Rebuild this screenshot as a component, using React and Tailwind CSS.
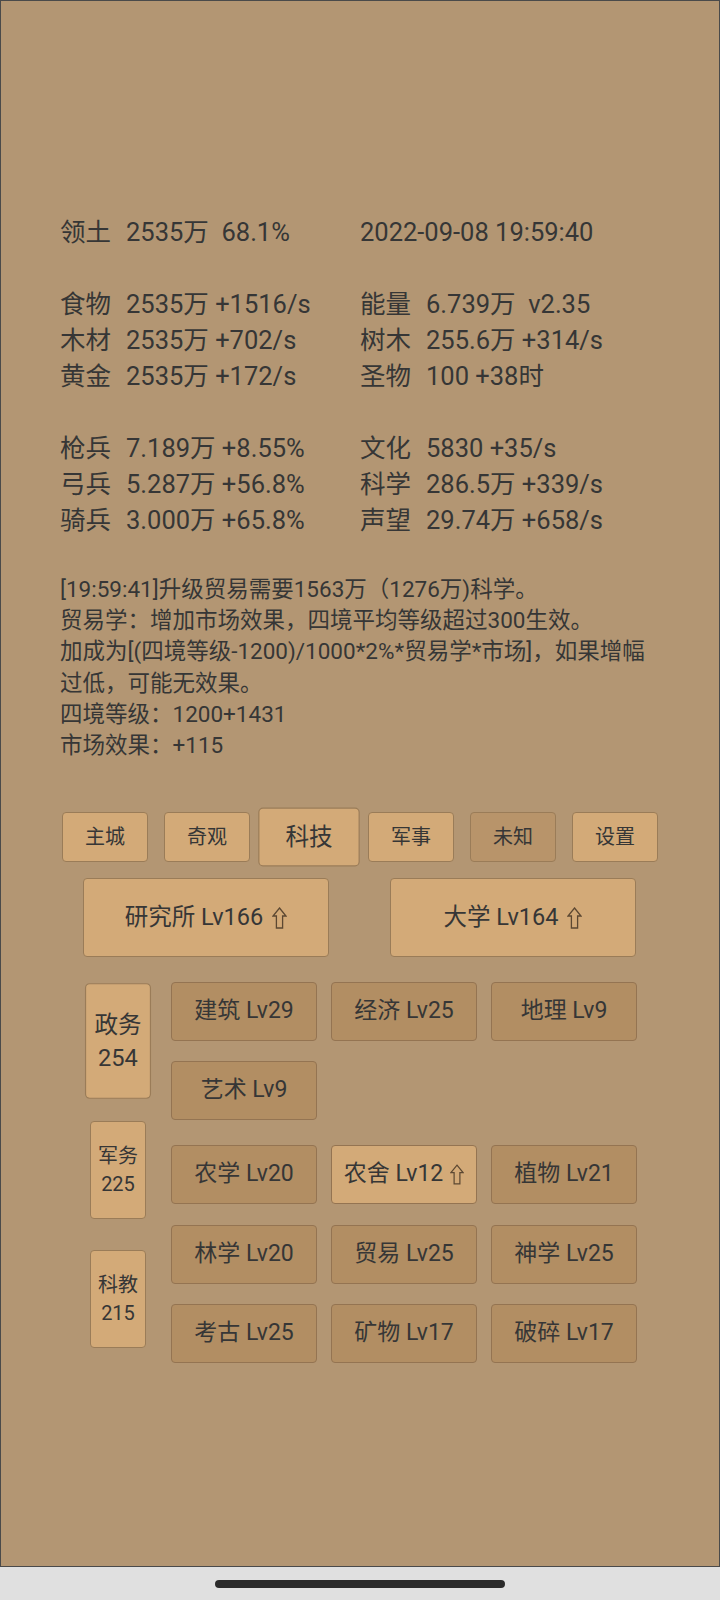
import React from 'react';

const stats = [
  [['领土', '2535万  68.1%'], [null, '2022-09-08 19:59:40']],
  null,
  [['食物', '2535万 +1516/s'], ['能量', '6.739万  v2.35']],
  [['木材', '2535万 +702/s'], ['树木', '255.6万 +314/s']],
  [['黄金', '2535万 +172/s'], ['圣物', '100 +38时']],
  null,
  [['枪兵', '7.189万 +8.55%'], ['文化', '5830 +35/s']],
  [['弓兵', '5.287万 +56.8%'], ['科学', '286.5万 +339/s']],
  [['骑兵', '3.000万 +65.8%'], ['声望', '29.74万 +658/s']],
];

const logLines = [
  '[19:59:41]升级贸易需要1563万（1276万)科学。',
  '贸易学：增加市场效果，四境平均等级超过300生效。',
  '加成为[(四境等级-1200)/1000*2%*贸易学*市场]，如果增幅',
  '过低，可能无效果。',
  '四境等级：1200+1431',
  '市场效果：+115',
];

const tabs = [
  { name: '主城' },
  { name: '奇观' },
  { name: '科技', active: true },
  { name: '军事' },
  { name: '未知', dim: true },
  { name: '设置' },
];

const techRows = [
  { mt: '', items: [{ name: '建筑 Lv29' }, { name: '经济 Lv25' }, { name: '地理 Lv9' }] },
  { mt: 'mt-[20px]', items: [{ name: '艺术 Lv9' }] },
  { mt: 'mt-[25px]', items: [{ name: '农学 Lv20' }, { name: '农舍 Lv12', up: true }, { name: '植物 Lv21' }] },
  { mt: 'mt-[21px]', items: [{ name: '林学 Lv20' }, { name: '贸易 Lv25' }, { name: '神学 Lv25' }] },
  { mt: 'mt-[20px]', items: [{ name: '考古 Lv25' }, { name: '矿物 Lv17' }, { name: '破碎 Lv17' }] },
];

const sides = [
  { name: '政务', num: '254', active: true },
  { name: '军务', num: '225' },
  { name: '科教', num: '215' },
];

function UpArrow({ className }) {
  return (
    <svg viewBox="0 0 15 22" className={className} fill="none" stroke="#5c4832" strokeWidth="1.3" strokeLinejoin="miter">
      <path d="M7.5 1 L14 9 L10.6 9 L10.6 21 L4.4 21 L4.4 9 L1 9 Z" />
    </svg>
  );
}

function StatCell({ cell }) {
  const [label, value] = cell;
  return (
    <div className="flex whitespace-pre">
      {label && <span className="w-[66px]">{label}</span>}
      <span>{value}</span>
    </div>
  );
}

export default function App() {
  return (
    <div className="w-[720px] h-[1600px] flex flex-col bg-[#e0e0e0] text-[#363636] font-[Roboto,'Noto_Sans_CJK_SC',sans-serif]">
      <div className="h-[1567px] border border-[#4a4a4a] bg-[#b39673] pt-[213px]">
        {/* resource stats */}
        <div className="pl-[59px] text-[25.5px] leading-[36px]">
          {stats.map((row, i) =>
            row ? (
              <div key={i} className="grid grid-cols-[300px_auto]">
                <StatCell cell={row[0]} />
                <StatCell cell={row[1]} />
              </div>
            ) : (
              <div key={i} className="h-[36px]" />
            )
          )}
        </div>

        {/* message log */}
        <div className="mt-[36px] pl-[59px] text-[22.5px] leading-[31.2px] whitespace-nowrap">
          {logLines.map((l, i) => (
            <div key={i}>{l}</div>
          ))}
        </div>

        {/* tabs */}
        <div className="mt-[51px] flex justify-center gap-[16px]">
          {tabs.map((t) => (
            <div
              key={t.name}
              className={
                'w-[86px] h-[50px] flex items-center justify-center rounded-[4px] border border-[#9a7c58] text-[20px] ' +
                (t.dim ? 'bg-[#b8946a] ' : 'bg-[#d3aa78] ') +
                (t.active ? 'scale-[1.18]' : '')
              }
            >
              {t.name}
            </div>
          ))}
        </div>

        {/* buildings */}
        <div className="mt-[16px] flex justify-center gap-[61px] pr-[1px]">
          {['研究所 Lv166', '大学 Lv164'].map((b) => (
            <div
              key={b}
              className="w-[246px] h-[79px] flex items-center justify-center gap-[9px] rounded-[4px] border border-[#9a7c58] bg-[#d3aa78] text-[23.5px]"
            >
              <span>{b}</span>
              <UpArrow className="w-[15px] h-[22px]" />
            </div>
          ))}
        </div>

        {/* tech tree */}
        <div className="mt-[25px] flex pl-[89px] gap-[25px]">
          <div className="w-[56px] pt-[10px] flex flex-col gap-[31px]">
            {sides.map((s) => (
              <div
                key={s.name}
                className={
                  'w-[56px] h-[98px] flex flex-col items-center justify-center rounded-[4px] border border-[#9a7c58] bg-[#d3aa78] text-[20px] leading-[28px] ' +
                  (s.active ? 'scale-[1.18]' : '')
                }
              >
                <span>{s.name}</span>
                <span>{s.num}</span>
              </div>
            ))}
          </div>
          <div className="flex flex-col">
            {techRows.map((r, i) => (
              <div key={i} className={'flex gap-[14px] ' + r.mt}>
                {r.items.map((it) => (
                  <div
                    key={it.name}
                    className={
                      'w-[146px] h-[59px] flex items-center justify-center gap-[7px] rounded-[4px] border border-[#947452] text-[23px] ' +
                      (it.up ? 'bg-[#d3aa78]' : 'bg-[#b28e63]')
                    }
                  >
                    <span>{it.name}</span>
                    {it.up && <UpArrow className="w-[14px] h-[21px]" />}
                  </div>
                ))}
              </div>
            ))}
          </div>
        </div>
      </div>
      <div className="flex-1 flex justify-center pt-[13px]">
        <div className="w-[290px] h-[8px] rounded-full bg-[#2b2b2b]" />
      </div>
    </div>
  );
}
